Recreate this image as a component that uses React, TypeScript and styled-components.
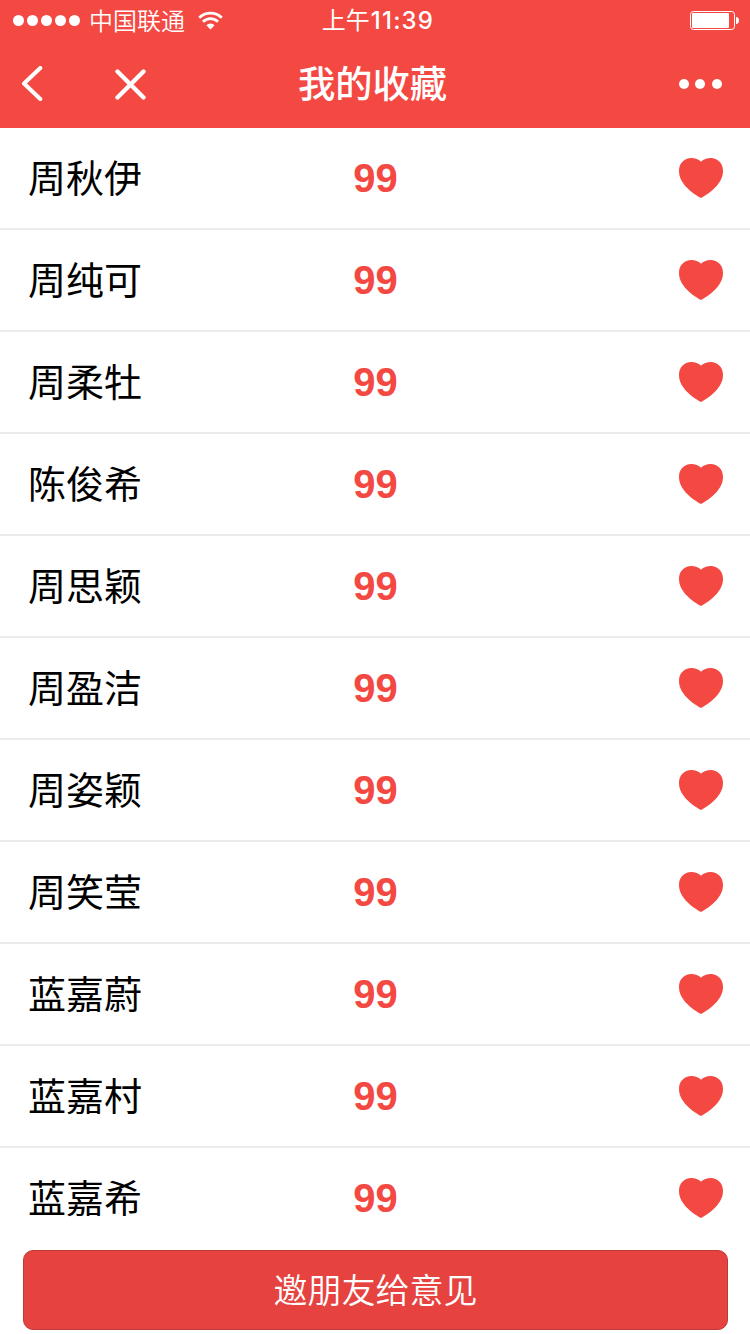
import React from 'react';
import styled, { createGlobalStyle } from 'styled-components';

const RED = '#f44842';

const GlobalStyle = createGlobalStyle`
  * { box-sizing: border-box; }
  body {
    margin: 0;
    background: #fff;
    font-family: "Liberation Sans", "Noto Sans CJK SC", sans-serif;
  }
`;

const Screen = styled.div`
  width: 750px;
  height: 1334px;
  display: flex;
  flex-direction: column;
  overflow: hidden;
  background: #fff;
`;

const Header = styled.header`
  height: 128px;
  flex: none;
  background: ${RED};
  color: #fff;
`;

const StatusBar = styled.div`
  height: 40px;
  display: grid;
  grid-template-columns: 1fr auto 1fr;
  grid-template-rows: 40px;
  align-items: center;
  padding: 0 11px 0 13px;
`;

const Carrier = styled.div`
  display: flex;
  align-items: center;
  font: 350 24px/38px "Noto Sans CJK SC", sans-serif;
`;

const Signal = styled.div`
  display: flex;
  gap: 3px;
  margin-right: 9px;
`;

const SignalDot = styled.i`
  width: 11px;
  height: 11px;
  border-radius: 50%;
  background: #fff;
`;

const CarrierName = styled.span`
  padding-bottom: 1px;
`;

const WifiIcon = styled.svg`
  margin-left: 13px;
`;

const Clock = styled.div`
  display: flex;
  padding-left: 3px;
  font: 400 24px/38px "Noto Sans CJK SC", sans-serif;
`;

const ClockDigits = styled.span`
  margin: 0 -1px 0 1px;
  padding-top: 2px;
  font: 500 24px/38px Inter, sans-serif;
  letter-spacing: 1.2px;
`;

const BatteryIcon = styled.svg`
  justify-self: end;
`;

const NavBar = styled.div`
  height: 88px;
  display: grid;
  grid-template-columns: 1fr auto 1fr;
  align-items: center;
  padding: 0 28px 0 21px;
`;

const NavActions = styled.div`
  display: flex;
  align-items: center;
  gap: 71px;
`;

const Title = styled.h1`
  margin: 0;
  padding: 0 0 5px 2px;
  font: 500 37.3px/80px "Noto Sans CJK SC", sans-serif;
`;

const MoreIcon = styled.svg`
  justify-self: end;
`;

const List = styled.ul`
  margin: 0;
  padding: 0;
  list-style: none;
`;

const Row = styled.li`
  height: 102px;
  display: grid;
  grid-template-columns: 1fr auto 1fr;
  grid-template-rows: 100px;
  align-items: center;
  padding: 0 27px 0 28px;
  border-bottom: 2px solid #ebebeb;
  &:last-child { border-bottom-color: transparent; }
`;

const Name = styled.span`
  padding-bottom: 4px;
  font: 400 38px/96px "Noto Sans CJK SC", sans-serif;
  color: #000;
`;

const Score = styled.span`
  font: 700 40px/100px "Liberation Sans", sans-serif;
  color: ${RED};
`;

const HeartIcon = styled.svg`
  justify-self: end;
`;

const InviteButton = styled.button`
  flex: none;
  height: 80px;
  margin: 0 22px 0 23px;
  padding: 0 0 2px;
  border: 1px solid #b93a36;
  border-radius: 10px;
  background: #e64340;
  color: #fff;
  font: 350 34px/76px "Noto Sans CJK SC", sans-serif;
`;

const names = [
  '周秋伊', '周纯可', '周柔牡', '陈俊希', '周思颖', '周盈洁',
  '周姿颖', '周笑莹', '蓝嘉蔚', '蓝嘉村', '蓝嘉希',
];

export default function App() {
  return (
    <Screen>
      <GlobalStyle />
      <Header>
        <StatusBar>
          <Carrier>
            <Signal>
              {[0, 1, 2, 3, 4].map((i) => <SignalDot key={i} />)}
            </Signal>
            <CarrierName>中国联通</CarrierName>
            <WifiIcon width="25" height="19" viewBox="0 0 25 19">
              <g fill="none" stroke="#fff" strokeWidth="2.7">
                <path d="M1.2 6.7a16 16 0 0 1 22.6 0" />
                <path d="M5 10.8a10.6 10.6 0 0 1 15 0" />
              </g>
              <path d="M8.4 14.3a5.8 5.8 0 0 1 8.2 0L12.5 18.4z" fill="#fff" />
            </WifiIcon>
          </Carrier>
          <Clock>上午<ClockDigits>11:39</ClockDigits></Clock>
          <BatteryIcon width="49" height="19" viewBox="0 0 49 19">
            <rect x="0.5" y="0.5" width="44" height="18" rx="3" fill="none" stroke="#fff" />
            <rect x="2" y="2" width="37" height="15" rx="1" fill="#fff" />
            <path d="M46 6c2 0 3 1.5 3 3.5S48 13 46 13z" fill="#fff" />
          </BatteryIcon>
        </StatusBar>
        <NavBar>
          <NavActions>
            <svg width="22" height="36" viewBox="0 0 22 36">
              <path d="M19.3 2L3 17.500L19.3 33" fill="none" stroke="#fff" strokeWidth="4" strokeLinecap="round" strokeLinejoin="round" />
            </svg>
            <svg width="33" height="32" viewBox="0 0 33 32">
              <path d="M3.500 3.500L29.500 29.500M29.500 3.500L3.500 29.500" stroke="#fff" strokeWidth="4.3" strokeLinecap="round" />
            </svg>
          </NavActions>
          <Title>我的收藏</Title>
          <MoreIcon width="43" height="10" viewBox="0 0 43 10" fill="#fff">
            <circle cx="5" cy="5" r="5" />
            <circle cx="21" cy="5" r="5" />
            <circle cx="38" cy="5" r="5" />
          </MoreIcon>
        </NavBar>
      </Header>
      <List>
        {names.map((name) => (
          <Row key={name}>
            <Name>{name}</Name>
            <Score>99</Score>
            <HeartIcon width="44" height="40" viewBox="0 0 44 40">
              <path d="M22 3.700C24.500 1.200 28 0 31.500 0C39 0 44 5.500 44 13C44 25 32 34.500 22 40C12 34.500 0 25 0 13C0 5.500 5 0 12.500 0C16 0 19.500 1.200 22 3.700Z" fill={RED} />
            </HeartIcon>
          </Row>
        ))}
      </List>
      <InviteButton>邀朋友给意见</InviteButton>
    </Screen>
  );
}
